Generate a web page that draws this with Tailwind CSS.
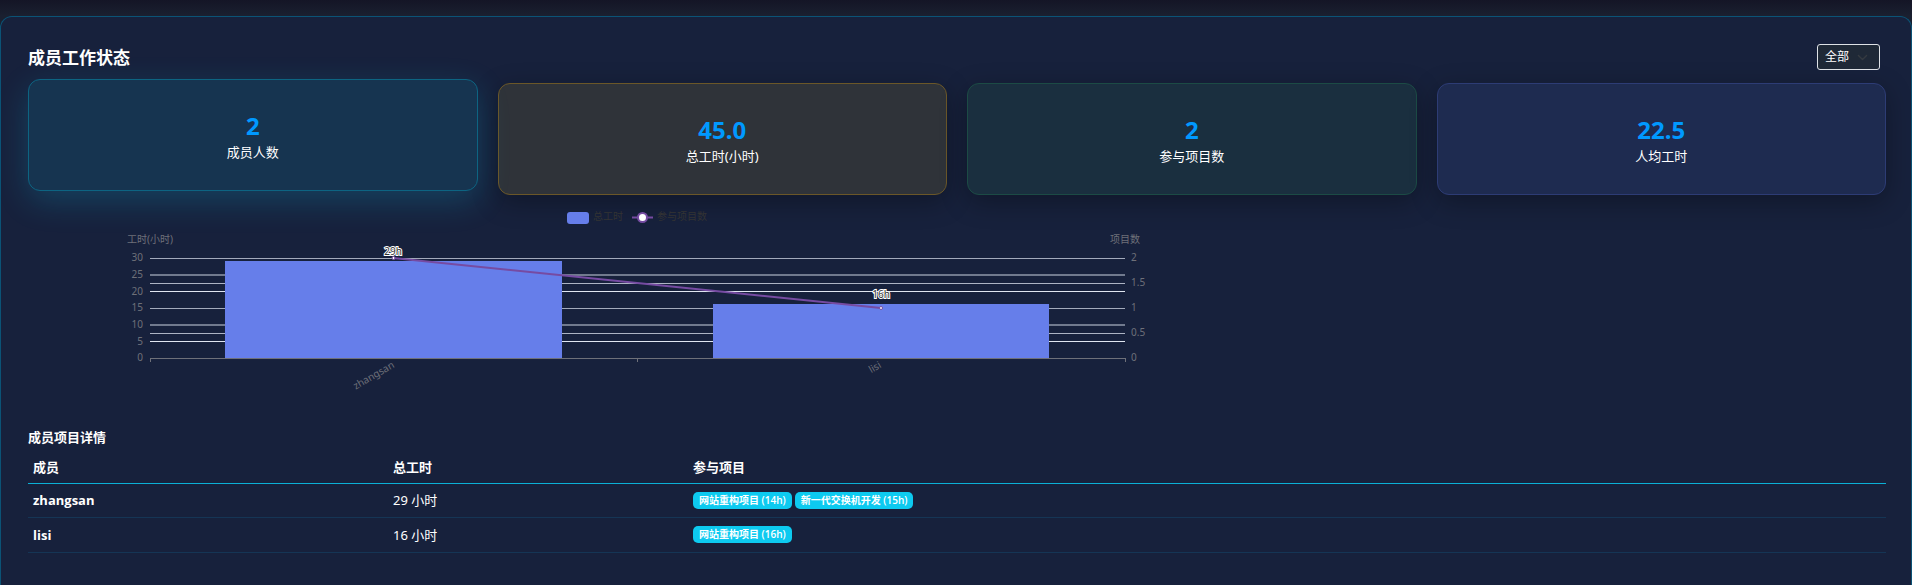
<!DOCTYPE html>
<html lang="zh-CN">

<head>
  <meta charset="UTF-8">
  <meta name="viewport" content="width=device-width, initial-scale=1.0">
  <title>成员工作状态</title>
  <script src="https://cdn.jsdelivr.net/npm/@tailwindcss/browser@4"></script>
</head>

<body class="min-h-screen overflow-hidden bg-[#1a1a2e] bg-linear-to-b from-[#141526] to-[#1a2030] to-[16px] pt-4 font-['Noto_Sans','Noto_Sans_CJK_SC',sans-serif] text-[13px] leading-5 text-white">
  <main class="min-h-[calc(100vh-16px)] rounded-t-xl border border-b-0 border-[#0b5376] bg-[#17213c] pt-[27px] pr-[25px] pb-8 pl-[27px]">

    <!-- Title and filter -->
    <header class="flex h-[26px] items-center justify-between pr-[6px]">
      <h1 class="pt-[2px] text-[17px] font-bold">成员工作状态</h1>
      <div class="relative">
        <select aria-label="成员筛选" class="block h-[26px] w-[63px] appearance-none rounded-[3px] border border-[#dee2e6] bg-[#1f2937] pl-[7px] text-[12px] leading-4 text-white">
          <option>全部</option>
          <option>zhangsan</option>
          <option>lisi</option>
        </select>
        <svg class="pointer-events-none absolute top-2 right-3 size-[11px]" viewBox="0 0 16 16" fill="none" stroke="#343a40" stroke-width="2" stroke-linecap="round" stroke-linejoin="round"><path d="m2 5 6 6 6-6" /></svg>
      </div>
    </header>

    <!-- Stat cards -->
    <section class="mt-[13px] grid grid-cols-4 gap-5 text-center">
      <div class="flex h-28 -translate-y-1 flex-col items-center justify-center rounded-xl border border-[#0d6482] bg-[#163450] pt-[6px] shadow-[0_10px_33px_rgba(13,202,240,0.2)]">
        <p class="text-2xl leading-7 font-bold text-[#0099ff]">2</p>
        <p class="leading-6">成员人数</p>
      </div>
      <div class="flex h-28 flex-col items-center justify-center rounded-xl border border-[#6b5728] bg-[#2f3339] pt-[6px] shadow-[0_7px_27px_rgba(0,0,0,0.3)]">
        <p class="text-2xl leading-7 font-bold text-[#0099ff]">45.0</p>
        <p class="leading-6">总工时(小时)</p>
      </div>
      <div class="flex h-28 flex-col items-center justify-center rounded-xl border border-[#1c4b45] bg-[#1a2f3f] pt-[6px] shadow-[0_7px_27px_rgba(0,0,0,0.3)]">
        <p class="text-2xl leading-7 font-bold text-[#0099ff]">2</p>
        <p class="leading-6">参与项目数</p>
      </div>
      <div class="flex h-28 flex-col items-center justify-center rounded-xl border border-[#2d3c75] bg-[#1e2b50] pt-[6px] shadow-[0_7px_27px_rgba(0,0,0,0.3)]">
        <p class="text-2xl leading-7 font-bold text-[#0099ff]">22.5</p>
        <p class="leading-6">人均工时</p>
      </div>
    </section>

    <!-- Hours and project chart -->
    <svg class="relative mt-[13px] block w-[1219px] max-w-full" viewBox="0 0 1219 200" font-size="10" fill="#6e7079" role="img" aria-label="成员工时与参与项目数">
      <!-- legend -->
      <rect x="539" y="4" width="22" height="12" rx="3" fill="#667eea" />
      <text x="565" y="12" fill="#333333">总工时</text>
      <path d="M604 9.500h21" stroke="#764ba2" stroke-width="2" />
      <circle cx="614.500" cy="9.500" r="4.500" fill="#ffffff" stroke="#764ba2" stroke-width="2" />
      <text x="629" y="12" fill="#333333">参与项目数</text>

      <!-- axis names -->
      <text x="122" y="35" text-anchor="middle">工时(小时)</text>
      <text x="1097" y="35" text-anchor="middle">项目数</text>

      <!-- grid -->
      <g stroke="#e0e6f1">
        <path d="M122 50.500h975" stroke-opacity=".7" />
        <path d="M122 67h975" stroke-width="2" stroke-opacity=".45" />
        <path d="M122 75.500h975" stroke-opacity=".75" />
        <path d="M122 83.500h975" />
        <path d="M122 100.500h975" stroke-opacity=".7" />
        <path d="M122 117h975" stroke-width="2" stroke-opacity=".45" />
        <path d="M122 125.500h975" stroke-opacity=".75" />
        <path d="M122 133.500h975" />
      </g>
      <path d="M122 150.500h975M122.500 150v4M609.500 150v4M1097.500 150v4" fill="none" stroke="#6e7079" />

      <!-- left axis -->
      <g text-anchor="end">
        <text x="115" y="53">30</text>
        <text x="115" y="70">25</text>
        <text x="115" y="87">20</text>
        <text x="115" y="103">15</text>
        <text x="115" y="120">10</text>
        <text x="115" y="137">5</text>
        <text x="115" y="153">0</text>
      </g>

      <!-- right axis -->
      <text x="1103" y="53">2</text>
      <text x="1103" y="78">1.5</text>
      <text x="1103" y="103">1</text>
      <text x="1103" y="128">0.5</text>
      <text x="1103" y="153">0</text>

      <!-- members -->
      <text transform="translate(367 159) rotate(-30)" text-anchor="end">zhangsan</text>
      <text transform="translate(854 159) rotate(-30)" text-anchor="end">lisi</text>

      <!-- bars and line -->
      <rect x="197" y="53" width="337" height="97" fill="#667eea" />
      <rect x="685" y="96" width="336" height="54" fill="#667eea" />
      <path d="M365 50 853 100" stroke="#764ba2" stroke-width="2" />
      <circle cx="365.500" cy="50" r="1.500" fill="#ffffff" stroke="#764ba2" />
      <circle cx="853" cy="100" r="1.500" fill="#ffffff" stroke="#764ba2" />
      <g fill="#333333" stroke="#ffffff" stroke-width="2" paint-order="stroke" text-anchor="middle">
        <text x="365" y="47">29h</text>
        <text x="853" y="90">16h</text>
      </g>
    </svg>

    <!-- Member details -->
    <section class="mt-[19px]">
      <h2 class="font-bold">成员项目详情</h2>
      <table class="mt-[5px] w-full table-fixed text-left">
        <thead>
          <tr class="h-[31px] border-b border-[#0bb0d6]">
            <th class="w-[360px] px-[5px]">成员</th>
            <th class="w-[300px] px-[5px]">总工时</th>
            <th class="px-[5px]">参与项目</th>
          </tr>
        </thead>
        <tbody>
          <tr class="h-[34px] border-b border-[#153555]">
            <td class="px-[5px] font-['Open_Sans','Noto_Sans_CJK_SC',sans-serif] font-bold">zhangsan</td>
            <td class="px-[5px]">29 小时</td>
            <td class="px-[5px]">
              <div class="flex gap-[3px] font-['Open_Sans','Noto_Sans_CJK_SC',sans-serif] text-[10px] leading-[17px] font-semibold">
                <span class="rounded-[5px] bg-[#0dcaf0] px-[6px]">网站重构项目 (14h)</span>
                <span class="rounded-[5px] bg-[#0dcaf0] px-[6px]">新一代交换机开发 (15h)</span>
              </div>
            </td>
          </tr>
          <tr class="h-[35px] border-b border-[#153555]">
            <td class="px-[5px] font-['Open_Sans','Noto_Sans_CJK_SC',sans-serif] font-bold">lisi</td>
            <td class="px-[5px]">16 小时</td>
            <td class="px-[5px]">
              <div class="flex gap-[3px] font-['Open_Sans','Noto_Sans_CJK_SC',sans-serif] text-[10px] leading-[17px] font-semibold">
                <span class="rounded-[5px] bg-[#0dcaf0] px-[6px]">网站重构项目 (16h)</span>
              </div>
            </td>
          </tr>
        </tbody>
      </table>
    </section>
  </main>
</body>

</html>
